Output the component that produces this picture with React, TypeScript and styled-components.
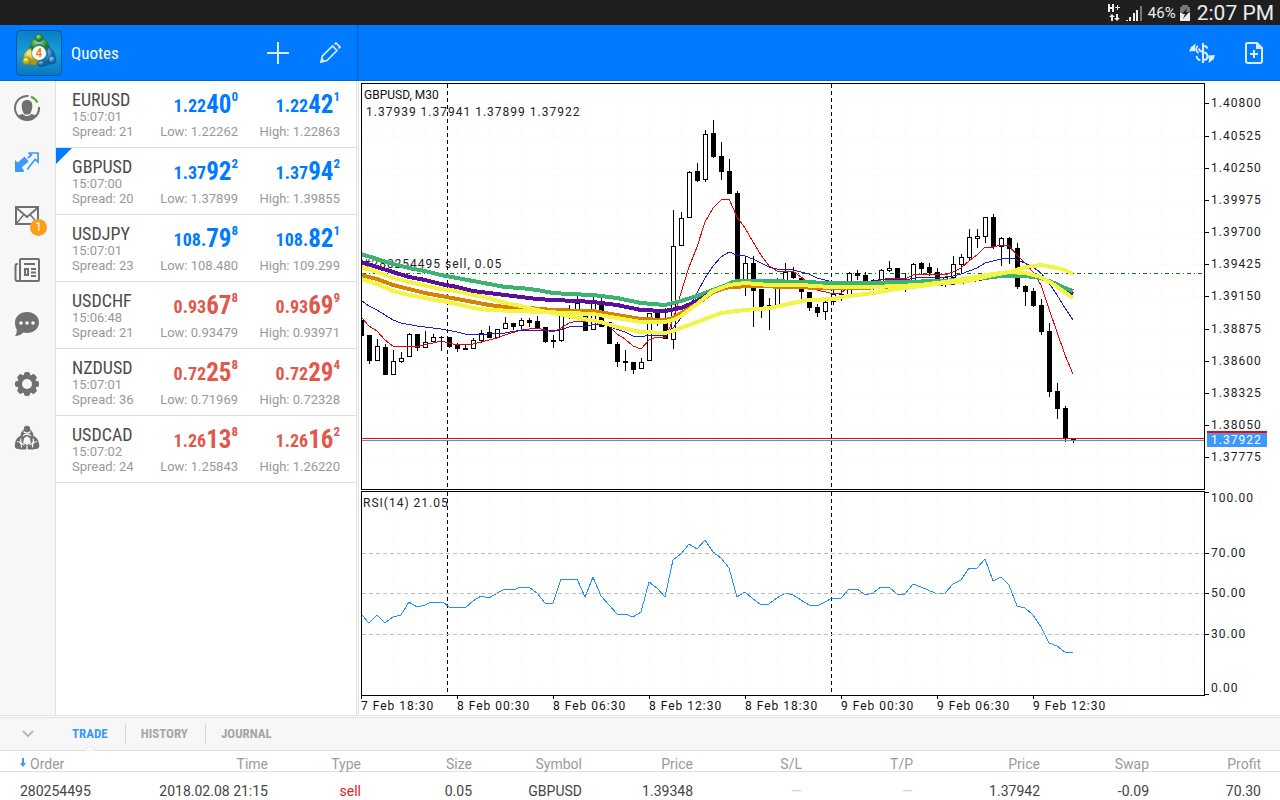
import React from "react";
import styled, { createGlobalStyle } from "styled-components";

const condensed = `"Roboto Condensed", "Liberation Sans Narrow", "Arial Narrow", Roboto, sans-serif`;
const blue = "#007aff";
const red = "#e0584b";
const rule = "#e0e0e0";

const GlobalStyle = createGlobalStyle`
  * { box-sizing: border-box; }
  body { margin: 0; background: #fff; font-family: Roboto, "Liberation Sans", sans-serif; }
  button { font: inherit; border: 0; padding: 0; background: none; cursor: pointer; }
`;

/* ---------- data ---------- */

type Rates = [string, string, string];
type Quote = {
  name: string; time: string; spread: number; up: boolean; selected?: boolean;
  bid: Rates; ask: Rates; low: string; high: string;
};

const quotes: Quote[] = [
  { name: "EURUSD", time: "15:07:01", spread: 21, up: true, bid: ["1.22", "40", "0"], ask: ["1.22", "42", "1"], low: "1.22262", high: "1.22863" },
  { name: "GBPUSD", time: "15:07:00", spread: 20, up: true, selected: true, bid: ["1.37", "92", "2"], ask: ["1.37", "94", "2"], low: "1.37899", high: "1.39855" },
  { name: "USDJPY", time: "15:07:01", spread: 23, up: true, bid: ["108.", "79", "8"], ask: ["108.", "82", "1"], low: "108.480", high: "109.299" },
  { name: "USDCHF", time: "15:06:48", spread: 21, up: false, bid: ["0.93", "67", "8"], ask: ["0.93", "69", "9"], low: "0.93479", high: "0.93971" },
  { name: "NZDUSD", time: "15:07:01", spread: 36, up: false, bid: ["0.72", "25", "8"], ask: ["0.72", "29", "4"], low: "0.71969", high: "0.72328" },
  { name: "USDCAD", time: "15:07:02", spread: 24, up: false, bid: ["1.26", "13", "8"], ask: ["1.26", "16", "2"], low: "1.25843", high: "1.26220" },
];

/* high, body top, body bottom, low, rising (1) or falling (0) */
const bars: number[][] = [
  [320,320,336,336,0],[335,335,361,364,0],[339,346,361,361,1],[344,347,375,375,0],[350,361,375,375,1],
  [352,358,362,363,1],[333,334,357,357,1],[334,334,348,351,0],[331,342,348,348,1],[334,337,342,343,1],
  [336,337,338,351,0],[337,337,347,348,0],[343,345,349,352,0],[345,348,350,350,0],[338,340,349,349,1],
  [330,333,341,343,1],[326,332,338,338,0],[329,329,338,338,1],[317,323,329,329,1],[323,323,327,330,0],
  [318,320,326,329,1],[318,320,323,327,0],[316,321,328,328,0],[327,327,342,343,0],[335,340,342,348,0],
  [308,312,341,342,1],[305,309,315,319,1],[296,303,313,313,1],[310,312,331,331,0],[297,302,330,330,1],
  [298,302,327,327,0],[322,322,344,344,0],[342,344,362,367,0],[350,361,363,371,0],[362,362,370,374,0],
  [358,362,369,369,1],[313,313,361,361,1],[313,313,323,326,0],[308,322,339,339,0],[210,246,340,349,1],
  [212,218,246,246,1],[171,172,218,218,1],[163,171,181,182,0],[130,134,180,182,1],[120,133,157,158,0],
  [142,156,172,180,0],[159,171,194,194,0],[191,193,282,282,0],[257,263,285,296,1],[256,263,291,327,0],
  [289,289,307,318,0],[298,305,306,330,0],[278,285,305,305,1],[263,272,288,289,1],[267,272,278,279,0],
  [278,278,292,300,0],[292,292,308,311,0],[304,307,313,317,0],[301,302,312,320,1],[289,294,302,305,1],
  [288,294,295,301,0],[272,273,295,295,1],[270,273,276,280,0],[272,275,283,283,0],[279,280,283,290,0],
  [269,270,284,284,1],[261,268,271,272,1],[268,268,283,283,0],[273,281,284,292,0],[263,264,282,282,1],
  [262,263,269,274,0],[263,267,273,276,0],[268,272,280,281,0],[276,277,280,287,1],[256,264,278,278,1],
  [254,257,265,273,1],[229,237,258,260,1],[229,236,239,248,1],[217,217,237,243,1],[214,217,247,249,0],
  [237,238,247,266,1],[237,238,249,264,0],[243,248,287,289,0],[285,286,292,306,0],[288,291,306,307,0],
  [299,305,332,335,0],[323,331,392,397,0],[383,391,409,419,0],[406,408,439,442,0],[438,438,441,443,0],
];

const bands: [string, string][] = [
  ["#3cb371", "361,254 377,259 393,264 409,268 425,271 441,275 457,278 473,281 489,284 505,287 521,288 537,290 553,293 569,294 593,295 617,298 641,303 665,305 681,301 697,296 713,290 729,284 737,282 769,282 801,283 830,284 865,283 905,282 937,281 961,280 985,278 1001,276 1025,276 1041,278 1049,281 1057,284 1065,288 1073,291"],
  ["#5b0f9e", "361,262 377,267 393,272 409,277 425,280 441,284 457,287 473,291 489,293 505,295 521,297 537,299 553,300 577,301 593,302 617,305 641,310 665,311 681,308 697,301 713,292 729,286 745,285 769,285 830,286 900,285 937,284 961,282 985,278 1001,276 1025,276 1041,278 1049,281 1057,285 1065,290 1073,294"],
  ["#d98200", "361,275 377,279 393,285 409,289 425,293 441,296 457,299 473,302 489,305 505,307 529,308 553,310 585,311 593,311 617,315 641,319 665,320 673,318 697,304 713,292 729,287 753,286 793,287 823,288 850,288 893,287 921,284 945,282 985,277"],
  ["#3cb371", "729,283 737,281 769,281 801,282 830,283 865,283 905,282 937,281 961,280 985,278 1001,276 1025,276 1041,278 1049,281 1057,284 1065,288 1073,291"],
  ["#f2f546", "361,279 377,284 393,291 409,295 441,301 457,304 473,308 489,310 516,311 543,312 569,313 593,314 617,318 641,322 665,322 673,320 681,316 697,304 713,291 729,285 745,283 769,285 801,285 830,287 873,287 920,285 945,282 969,278 993,274 1009,272 1025,273 1041,277 1053,284 1063,291 1073,298"],
  ["#f2f546", "361,267 377,272 393,278 409,282 441,289 457,291 473,295 489,298 505,303 521,306 537,310 553,313 569,316 589,320 601,322 617,327 641,332 665,333 673,331 681,328 689,325 705,319 721,313 745,310 769,308 793,303 809,300 833,299 849,296 873,293 897,289 921,286 945,283 969,281 993,275 1010,272 1025,267 1041,265 1057,268 1065,270 1073,274"],
];

const fastLine = "362,318 369,326 377,331 385,340 393,346 401,347 409,346 419,346 433,343 441,341 457,345 473,344 481,342 489,340 497,338 505,335 521,330 537,328 545,330 553,332 561,328 569,323 577,321 593,322 601,324 610,327 617,334 625,339 633,346 641,349 649,340 657,337 665,338 673,320 681,293 689,267 697,247 705,222 713,208 721,200 729,199 737,217 745,228 753,242 761,255 769,266 777,271 793,271 801,277 809,283 817,290 830,293 841,293 849,287 865,286 881,280 889,278 897,278 905,279 913,275 921,274 937,274 945,275 953,272 961,268 969,261 977,255 985,247 993,247 1001,245 1009,246 1017,255 1025,263 1033,272 1041,285 1049,309 1057,332 1065,355 1073,374";
const slowLine = "362,301 369,306 377,310 385,315 393,320 401,323 417,326 441,329 457,332 465,334 489,334 505,333 521,330 537,330 556,331 569,327 586,326 596,324 603,324 610,327 625,332 633,336 641,337 649,335 665,335 673,328 681,318 689,307 697,293 705,278 713,266 721,257 729,252 737,255 745,256 753,259 769,267 777,269 793,270 809,274 817,278 833,282 849,282 873,281 883,279 910,279 921,277 945,277 953,276 961,274 977,268 985,263 1001,259 1012,258 1025,263 1033,267 1041,273 1049,283 1057,295 1065,308 1073,320";
const rsiLine = "362,615 369,623 377,615 385,623 393,617 401,615 409,602 417,607 425,605 431,602 443,602 449,607 465,608 473,601 481,596 489,598 497,593 505,589 513,590 521,587 529,587 537,593 545,603 553,603 561,579 577,579 585,597 593,577 601,596 617,614 625,614 633,617 641,612 649,582 657,588 665,597 673,560 681,554 689,544 697,549 705,540 713,552 721,558 729,568 737,597 745,592 753,599 760,604 769,604 777,598 785,593 793,595 801,600 809,605 819,605 827,601 832,598 841,598 849,589 857,589 864,594 869,594 873,593 881,587 889,587 897,594 905,594 913,584 921,587 935,593 945,593 953,584 961,580 969,568 977,568 985,559 993,581 1001,577 1009,585 1017,606 1025,608 1033,615 1041,627 1049,643 1057,646 1065,652 1073,652";

const priceTicks: [string, number][] = [
  ["1.40800", 103], ["1.40525", 136], ["1.40250", 168], ["1.39975", 200], ["1.39700", 232], ["1.39425", 264],
  ["1.39150", 296], ["1.38875", 329], ["1.38600", 361], ["1.38325", 393], ["1.38050", 425], ["1.37775", 457],
];
const rsiTicks: [string, number][] = [["70.00", 553], ["50.00", 593], ["30.00", 634]];
const times = ["7 Feb 18:30", "8 Feb 00:30", "8 Feb 06:30", "8 Feb 12:30", "8 Feb 18:30", "9 Feb 00:30", "9 Feb 06:30", "9 Feb 12:30"];

/* ---------- status bar and header ---------- */

const StatusBar = styled.div`
  display: flex; align-items: center; justify-content: flex-end;
  height: 25px; padding-right: 6px; background: #1f1f1f; color: #ececec;
`;
const Battery = styled.span`margin: 0 3px 0 6px; font-size: 15px; line-height: 24px;`;
const Clock = styled.span`margin-left: 6px; font-size: 21px; line-height: 22px;`;

const Header = styled.header`
  display: flex; height: 56px; background: ${blue}; color: #fff; border-bottom: 1px solid #0068dc;
`;
const HeaderLeft = styled.div`
  display: flex; align-items: center; width: 359px; padding: 0 14px 0 15px;
  border-right: 1px solid #0068dc; box-shadow: inset -2px 0 0 #0070ea;
`;
const Title = styled.h1`
  flex: 1; margin: 0 0 0 8px; padding-top: 1px; font: 400 17px/24px ${condensed};
`;
const HeaderRight = styled.div`
  flex: 1; display: flex; align-items: center; justify-content: flex-end; gap: 24px; padding-right: 12px;
`;
const IconButton = styled.button`
  display: flex; align-items: center; justify-content: center; width: 28px; height: 28px; color: #dbeafd;
  ${HeaderLeft} & + & { margin-left: 24px; }
`;

/* ---------- main area ---------- */

const Main = styled.main`display: flex; height: 634px;`;
const Rail = styled.nav`
  display: flex; flex-direction: column; align-items: center; width: 56px; padding: 13px 1px 0 0;
  background: #f7f7f7; border-right: 1px solid ${rule};
`;
const RailButton = styled.button<{ $gap?: number }>`
  position: relative; display: flex; align-items: center; justify-content: center;
  width: 28px; height: 28px; margin-bottom: ${(p) => p.$gap ?? 26}px; color: #707070;
`;
const Count = styled.span`
  position: absolute; left: 17px; top: 17px; width: 17px; height: 17px; border-radius: 50%;
  background: #ff9c1a; color: #fff; font-size: 12px; line-height: 17px; text-align: center;
`;

const QuoteList = styled.ul`
  width: 301px; margin: 0; padding: 0; list-style: none; border-right: 1px solid ${rule};
`;
const QuoteRow = styled.li`
  position: relative; display: flex; height: 67px; padding: 9px 16px 0; border-bottom: 1px solid ${rule};
`;
const Corner = styled.span`
  position: absolute; left: 0; top: 0; border-top: 16px solid ${blue}; border-right: 16px solid transparent;
`;
const Pair = styled.div`flex: 1;`;
const PairName = styled.div`font: 400 18px/20px ${condensed}; color: #4c4c4c;`;
const Note = styled.div<{ $line: number }>`
  font-size: 13px; line-height: ${(p) => p.$line}px; color: #999; white-space: nowrap;
`;
const Side = styled.div`display: flex; flex-direction: column; align-items: flex-end; width: 102px;`;
const Price = styled.div<{ $up: boolean }>`
  display: flex; align-items: flex-end; height: 34px; padding-bottom: 8px;
  font-family: ${condensed}; font-weight: 700; color: ${(p) => (p.$up ? blue : red)};
`;
const Small = styled.span`font-size: 18px; line-height: 20px;`;
const Big = styled.span`font-size: 25px; line-height: 22px;`;
const Pip = styled.sup`align-self: flex-start; font-size: 13px; line-height: 14px;`;

/* ---------- chart ---------- */

const ChartArea = styled.section`
  flex: 1; min-width: 0; display: grid; grid-template-columns: minmax(0, 1fr) 75px;
  grid-template-rows: 407px 205px 1fr; row-gap: 1px; padding: 2px 0 0 2px; margin-left: 1px;
  border-left: 1px solid ${rule};
`;
const Pane = styled.div`border: 1px solid #000; svg { display: block; width: 100%; height: 100%; }`;
const Axis = styled.div`svg { display: block; width: 75px; height: 100%; overflow: visible; }`;
const TimeAxis = styled.div`
  grid-column: 1 / -1; display: flex; overflow: hidden; margin-top: -1px;
`;
const TimeLabel = styled.div`
  flex: none; width: 96px; font-size: 12px; line-height: 15px; letter-spacing: 1px; color: #111; white-space: nowrap;
  &::before { content: ""; display: block; width: 1px; height: 3px; background: #000; }
`;
const Label = styled.text<{ $light?: boolean }>`
  font: 12px Roboto, sans-serif; letter-spacing: 1px; fill: ${(p) => (p.$light ? "#fff" : "#222")};
`;
const Caption = styled.text`font: 12px Roboto, sans-serif; fill: #111;`;

/* ---------- bottom panel ---------- */

const Terminal = styled.section`border-top: 1px solid ${rule}; padding-top: 1px;`;
const TabBar = styled.div`
  display: flex; align-items: center; height: 34px; background: #f7f7f7;
  border-top: 1px solid ${rule}; border-bottom: 1px solid ${rule};
`;
const Collapse = styled.button`display: flex; justify-content: center; width: 56px; color: #b9b9b9;`;
const Tabs = styled.nav`
  display: flex;
  > * + *::before { content: ""; position: absolute; left: 0; top: 6px; height: 20px; border-left: 1px solid #d4d4d4; }
`;
const Tab = styled.button<{ $active?: boolean }>`
  position: relative; height: 32px; padding: 0 17px 0 16px; font: 700 13px/32px ${condensed};
  color: ${(p) => (p.$active ? "#3b99fc" : "#a6a6a6")};
`;
const Notch = styled.svg`position: absolute; left: 50%; bottom: -1px; margin-left: -7px;`;
const Orders = styled.table`
  width: 100%; table-layout: fixed; border-collapse: separate; border-spacing: 0; font-size: 14px;
  th { height: 21px; padding: 6px 0 0; font-weight: 400; line-height: 14px; text-align: right; color: #9b9b9b; border-bottom: 1px solid ${rule}; }
  td { height: 28px; padding: 10px 0 0; line-height: 18px; text-align: right; color: #444; }
  th:first-child, td:first-child { padding-left: 20px; text-align: left; }
`;
const SellCell = styled.td`&& { color: #e32222; }`;
const EmptyCell = styled.td`&& { color: #d4d4d4; }`;

/* ---------- icons ---------- */

const Logo = () => (
  <svg width="48" height="48" viewBox="0 0 48 48" aria-label="MetaTrader 4">
    <defs>
      <linearGradient id="tile" x1="0" y1="0" x2="0" y2="1"><stop offset="0" stopColor="#0a7cc6" /><stop offset=".5" stopColor="#15a0d8" /><stop offset="1" stopColor="#0878be" /></linearGradient>
      <radialGradient id="green" cx=".4" cy=".3"><stop offset="0" stopColor="#a5dc8d" /><stop offset="1" stopColor="#237d30" /></radialGradient>
      <radialGradient id="yellow" cx=".4" cy=".3"><stop offset="0" stopColor="#fff48a" /><stop offset="1" stopColor="#a59a1c" /></radialGradient>
      <radialGradient id="sky" cx=".4" cy=".3"><stop offset="0" stopColor="#8fd0f8" /><stop offset="1" stopColor="#145fa6" /></radialGradient>
    </defs>
    <rect x="1.500" y="1.500" width="45" height="45" rx="4" fill="url(#tile)" stroke="#0a55a8" />
    <path d="M15 20c0-7 3-11 9-11s10 4 11 12l-4 1-3-5c-3-2-6-2-8 1l-3 4z" fill="url(#green)" stroke="#1c6d2c" strokeWidth=".6" />
    <circle cx="24" cy="9" r="3.700" fill="url(#green)" stroke="#1c6d2c" strokeWidth=".6" />
    <path d="M16 19c-5 2-8 6-8 11l4 3c3 3 8 4 12 2l-1-4c-4 0-7-4-6-8z" fill="url(#yellow)" stroke="#857708" strokeWidth=".6" />
    <circle cx="11.500" cy="32" r="4" fill="url(#yellow)" stroke="#857708" strokeWidth=".6" />
    <path d="M33 18c5 2 7 7 7 12l-4 4c-4 3-8 3-12 1l3-4c5-1 7-4 5-9z" fill="url(#sky)" stroke="#0c4a86" strokeWidth=".6" />
    <circle cx="37" cy="31" r="4" fill="url(#sky)" stroke="#0c4a86" strokeWidth=".6" />
    <path d="M30 36c-3 3-8 1-8-2l6-3" fill="url(#sky)" stroke="#0c4a86" strokeWidth=".6" />
    <circle cx="24" cy="24" r="7" fill="#fff" />
    <text x="24" y="28" textAnchor="middle" fontFamily="Roboto, sans-serif" fontSize="12" fontWeight="700" fill="#ee8420">4</text>
  </svg>
);
const Plus = () => <svg width="24" height="24" fill="none" stroke="currentColor" strokeWidth="2"><path d="M12 1v22M1 12h22" /></svg>;
const Pencil = () => (
  <svg width="22" height="22" fill="none" stroke="currentColor" strokeWidth="1.700">
    <path d="M2 20l1.500-6L13.500 4l4.500 4.500L8 18.500zM15.500 2.500L17 1 21 5 19.500 6.500" />
    <path d="M2 20l1-3.500L5.500 19z" fill="currentColor" strokeWidth="1" />
  </svg>
);
const TradeIcon = () => (
  <svg width="28" height="24" viewBox="0 0 28 24" fill="none" stroke="currentColor" strokeWidth="2">
    <path d="M15 2v20M19.500 7.500c-1-2-2.500-2.700-4.500-2.700M15 11c3 .5 4.500 2 4.500 4.500S18 19 15 19M15 11c-2.500-.5-4-1.500-4-3.500" />
    <path d="M10 5c-2.500 1.500-2.500 5 .5 7M8.500 15c.5 2.500 2 4 4 4.300" strokeWidth="1.800" />
    <path d="M1 10.500L3 6l5-3.500L7 6l.5 4zM27 14L25.500 18.500l-5 3.500.5-3.500-1-4z" fill="currentColor" stroke="none" />
  </svg>
);
const NewChart = () => (
  <svg width="20" height="24" fill="none" stroke="currentColor" strokeWidth="2">
    <path d="M3 2h10l5 5v13a2 2 0 0 1-2 2H4a2 2 0 0 1-2-2V3zM10 9v8M6 13h8" />
    <path d="M12 2v6h6z" fill="currentColor" stroke="none" />
  </svg>
);
const Account = () => (
  <svg width="28" height="28" fill="none" strokeWidth="2">
    <path d="M15.500 2.100A12 12 0 1 0 26 13" stroke="currentColor" />
    <path d="M18 2.700a12 12 0 0 1 6.500 5.800" stroke="#3cb915" />
    <path d="M14 6c3.700 0 5.300 2.500 5.300 6 0 4-2 8-3.300 8.500h-4C10.700 20 8.700 16 8.700 12c0-3.500 1.600-6 5.300-6z" fill="currentColor" />
    <path d="M4.500 21.500l5-1.500 3 2h3l3-2 5 1.500C21 25 18 26.200 14 26.200S7 25 4.500 21.500z" fill="currentColor" />
  </svg>
);
const TradeArrows = () => (
  <svg width="26" height="24" fill="#3b99fc">
    <path d="M1 10l2.700 2.500 7-6 4 5.300-7 5.500 2 2.700v2H1z" />
    <path d="M14.500 3h9.500v9l-2.800-2.700-8 10.200M14.500 3l3 2-3.800 3" fill="none" stroke="#3b99fc" strokeWidth="1.700" />
  </svg>
);
const Mail = () => (
  <svg width="26" height="20" fill="none" stroke="currentColor" strokeWidth="2">
    <path d="M2 1h22v17H2zM2.500 2L13 11 23.500 2" /><path d="M2.500 17.500l7-8.500M23.500 17.500l-7-8.500" strokeWidth="1.400" />
  </svg>
);
const News = () => (
  <svg width="26" height="26" fill="none" stroke="currentColor" strokeWidth="2">
    <rect x="6" y="2" width="19" height="22" rx="1" /><path d="M4 7H3C2 7 1.500 8 1.500 9v13c0 1.500 1 2 2 2H7" />
    <path d="M10 7h11M17 12h5M17 15.500h5M17 19h5" /><rect x="11" y="12" width="3" height="6" />
  </svg>
);
const Chat = () => (
  <svg width="26" height="26">
    <path d="M13 1c6.700 0 12 4.500 12 10.500S19.700 22 13 22c-1.500 0-2.500-.2-3.500-.5C7 23.500 4.500 25 1 25c1.500-2 2-4.500 1.700-6.500C1.500 16.500 1 14 1 11.500 1 5.500 6.300 1 13 1z" fill="currentColor" />
    <g fill="#f7f7f7"><circle cx="7" cy="12" r="1.800" /><circle cx="13" cy="12" r="1.800" /><circle cx="19" cy="12" r="1.800" /></g>
  </svg>
);
const Gear = () => (
  <svg width="26" height="26" viewBox="-13 -13 26 26">
    <g fill="currentColor">
      {[0, 45, 90, 135].map((a) => <rect key={a} x="-3" y="-12" width="6" height="24" rx="2" transform={`rotate(${a})`} />)}
      <circle r="9.700" />
    </g>
    <circle r="5" fill="#f7f7f7" />
  </svg>
);
const Community = () => (
  <svg width="26" height="26" fill="currentColor">
    <path d="M6.500 13C6 7 9 4 13 4s7 3 6.500 9l-3 1-3.500-3-3.500 3z" />
    <path d="M6.500 11C2 13 .5 17 1.500 22c3 3 8 3 11.500 2v-4l-4-2 1-4zM19.500 11c4.500 2 6 6 5 11-3 3-8 3-11.500 2v-4l4-2-1-4z" />
    <circle cx="13" cy="4" r="3.200" /><circle cx="4.200" cy="20.500" r="3.500" /><circle cx="21.800" cy="20.500" r="3.500" />
    <g fill="none" stroke="#f7f7f7" strokeWidth="1.200">
      <path d="M9.500 6.500c2 1.800 5 1.800 7 0M9 11c2-2.500 6-2.500 8 0M13 13v5M10.500 13l2.500 2 2.500-2" />
      <path d="M3 16.500c3 0 5 2.500 4.500 6M7 13.500c-1 3 .5 5.500 3.500 6.500M23 16.500c-3 0-5 2.500-4.500 6M19 13.500c1 3-.5 5.500-3.500 6.500M13 20.500V25" />
    </g>
  </svg>
);
const SortArrow = () => <svg width="10" height="12" fill="#3b99fc"><path d="M2 1h2v5h2L3 10 0 6h2z" /></svg>;

/* ---------- parts ---------- */

const Rate = ({ value, up, note }: { value: Rates; up: boolean; note: string }) => (
  <Side>
    <Price $up={up}><Small>{value[0]}</Small><Big>{value[1]}</Big><Pip>{value[2]}</Pip></Price>
    <Note $line={15}>{note}</Note>
  </Side>
);

const gridColumns = Array.from({ length: 60 }, (_, i) => 393 + 32 * i);

const Columns = ({ top, bottom }: { top: number; bottom: number }) => (
  <>
    {gridColumns.map((x) => <path key={x} d={`M${x + 0.5} ${top}V${bottom}`} stroke="#f0f0f0" strokeDasharray="1 4" />)}
    {[447, 831].map((x) => <path key={x} d={`M${x + 0.5} ${top}V${bottom}`} stroke="#000" strokeDasharray="4 3" />)}
  </>
);

const PricePane = () => (
  <Pane>
    <svg shapeRendering="crispEdges" role="img" aria-label="GBPUSD price chart">
      {priceTicks.map(([p, y]) => <line key={p} x1="0" x2="100%" y1={y - 83.5} y2={y - 83.5} stroke="#f0f0f0" strokeDasharray="1 4" />)}
      <line x1="0" x2="100%" y1="189.500" y2="189.500" stroke="#0a7a0a" strokeDasharray="4 3 1 3" />
      <g transform="translate(-362 -84)" fill="none">
        <Columns top={84} bottom={489} />
        {bars.map(([high, top, bottom, low, rising], i) => {
          const x = 361 + 8 * i;
          return (
            <g key={i}>
              <rect x={x} y={high} width="1" height={low - high} fill="#000" />
              {rising
                ? <rect x={x - 1.5} y={top + 0.5} width="4" height={bottom - top - 1} fill="#fff" stroke="#000" />
                : <rect x={x - 2} y={top} width="5" height={bottom - top} fill="#000" />}
            </g>
          );
        })}
        <Label x="363" y="268">#280254495 sell, 0.05</Label>
        <polyline points={fastLine} stroke="#f00000" />
        <polyline points={slowLine} stroke="#1c1cc8" />
        {bands.map(([color, points], i) => <polyline key={i} points={points} stroke={color} strokeWidth="4" />)}
        <Caption x="364" y="99">GBPUSD, M30</Caption>
        <Label x="366" y="116">1.37939 1.37941 1.37899 1.37922</Label>
      </g>
      <line x1="0" x2="100%" y1="354.500" y2="354.500" stroke="#f00" />
      <line x1="0" x2="100%" y1="356.500" y2="356.500" stroke="#3b99fc" />
    </svg>
  </Pane>
);

const RsiPane = () => (
  <Pane>
    <svg shapeRendering="crispEdges" role="img" aria-label="RSI indicator">
      <g transform="translate(-362 -492)" fill="none">
        <Columns top={492} bottom={695} />
        <polyline points={rsiLine} stroke="#1e90ff" />
        <Label x="363" y="507">RSI(14) 21.05</Label>
      </g>
      {rsiTicks.map(([p, y]) => <line key={p} x1="0" x2="100%" y1={y - 491.5} y2={y - 491.5} stroke="#c0c0c0" strokeDasharray="4 3" />)}
    </svg>
  </Pane>
);

const Tick = ({ y }: { y: number }) => <rect x="0" y={y} width="4" height="1" fill="#000" />;

const columns = [130, 138, 93, 111, 110, 111, 109, 111, 127, 109, 112, 19];

export default function App() {
  return (
    <>
      <GlobalStyle />
      <StatusBar>
        <svg width="34" height="20" fill="#ececec">
          <path d="M1 1h2v3h2V1h2v8H5V6H3v3H1zM10 2h1v2h2v1h-2v2h-1V5H8V4h2zM5 11l3 3H6v4H4v-4H2zM10 18l-3-3h2v-4h2v4h2z" transform="translate(-1 0)" />
          <path d="M18 17h2v1h-2zM21 14h2v4h-2zM25 10h2v8h-2zM28 7h2v11h-2z" /><path d="M32 3h2v15h-2z" fill="#777" />
        </svg>
        <Battery>46%</Battery>
        <svg width="12" height="18">
          <path d="M3 1h6v2h2v14H1V3h2z" fill="#777" /><path d="M1 9h10v8H1z" fill="#ececec" />
          <path d="M8 4L3 10h3l-2 5 6-7H7z" fill="#1f1f1f" />
        </svg>
        <Clock>2:07 PM</Clock>
      </StatusBar>

      <Header>
        <HeaderLeft>
          <Logo />
          <Title>Quotes</Title>
          <IconButton aria-label="Add symbol"><Plus /></IconButton>
          <IconButton aria-label="Edit symbols"><Pencil /></IconButton>
        </HeaderLeft>
        <HeaderRight>
          <IconButton aria-label="Trade"><TradeIcon /></IconButton>
          <IconButton aria-label="New chart"><NewChart /></IconButton>
        </HeaderRight>
      </Header>

      <Main>
        <Rail>
          <RailButton aria-label="Accounts"><Account /></RailButton>
          <RailButton aria-label="Trade"><TradeArrows /></RailButton>
          <RailButton aria-label="Mail"><Mail /><Count>1</Count></RailButton>
          <RailButton aria-label="News"><News /></RailButton>
          <RailButton aria-label="Chat" $gap={32}><Chat /></RailButton>
          <RailButton aria-label="Settings"><Gear /></RailButton>
          <RailButton aria-label="Community"><Community /></RailButton>
        </Rail>

        <QuoteList>
          {quotes.map((q) => (
            <QuoteRow key={q.name}>
              {q.selected && <Corner />}
              <Pair>
                <PairName>{q.name}</PairName>
                <Note $line={14}>{q.time}</Note>
                <Note $line={15}>Spread: {q.spread}</Note>
              </Pair>
              <Rate value={q.bid} up={q.up} note={`Low: ${q.low}`} />
              <Rate value={q.ask} up={q.up} note={`High: ${q.high}`} />
            </QuoteRow>
          ))}
        </QuoteList>

        <ChartArea>
          <PricePane />
          <Axis>
            <svg>
              <g transform="translate(0 -83)">
                {priceTicks.map(([p, y]) => <g key={p}><Tick y={y} /><Label x="6" y={y + 4}>{p}</Label></g>)}
                <rect x="2" y="431" width="60" height="16" fill="#3b99fc" />
                <rect x="2" y="431" width="60" height="2" fill="#f00" />
                <Label x="6" y="444" $light>1.37922</Label>
              </g>
            </svg>
          </Axis>
          <RsiPane />
          <Axis>
            <svg>
              <g transform="translate(0 -491)">
                <Tick y={492} /><Label x="6" y="502">100.00</Label>
                {rsiTicks.map(([p, y]) => <g key={p}><Tick y={y} /><Label x="6" y={y + 4}>{p}</Label></g>)}
                <Tick y={694} /><Label x="6" y="692">0.00</Label>
              </g>
            </svg>
          </Axis>
          <TimeAxis>{times.map((t) => <TimeLabel key={t}>{t}</TimeLabel>)}</TimeAxis>
        </ChartArea>
      </Main>

      <Terminal>
        <TabBar>
          <Collapse aria-label="Collapse panel">
            <svg width="14" height="10" fill="none" stroke="currentColor" strokeWidth="2"><path d="M2 2l5 5 5-5" /></svg>
          </Collapse>
          <Tabs>
            <Tab $active>
              TRADE
              <Notch width="14" height="6"><path d="M0 5.500h1L7 1l6 4.500h1" fill="#fff" stroke={rule} /></Notch>
            </Tab>
            <Tab>HISTORY</Tab>
            <Tab>JOURNAL</Tab>
          </Tabs>
        </TabBar>
        <Orders>
          <colgroup>{columns.map((w, i) => <col key={i} width={w} />)}</colgroup>
          <thead>
            <tr>
              <th><SortArrow />Order</th>
              <th>Time</th><th>Type</th><th>Size</th><th>Symbol</th><th>Price</th><th>S/L</th><th>T/P</th><th>Price</th><th>Swap</th><th>Profit</th><th />
            </tr>
          </thead>
          <tbody>
            <tr>
              <td>280254495</td><td>2018.02.08 21:15</td><SellCell>sell</SellCell><td>0.05</td><td>GBPUSD</td><td>1.39348</td>
              <EmptyCell>—</EmptyCell><EmptyCell>—</EmptyCell><td>1.37942</td><td>-0.09</td><td>70.30</td><td />
            </tr>
          </tbody>
        </Orders>
      </Terminal>
    </>
  );
}
